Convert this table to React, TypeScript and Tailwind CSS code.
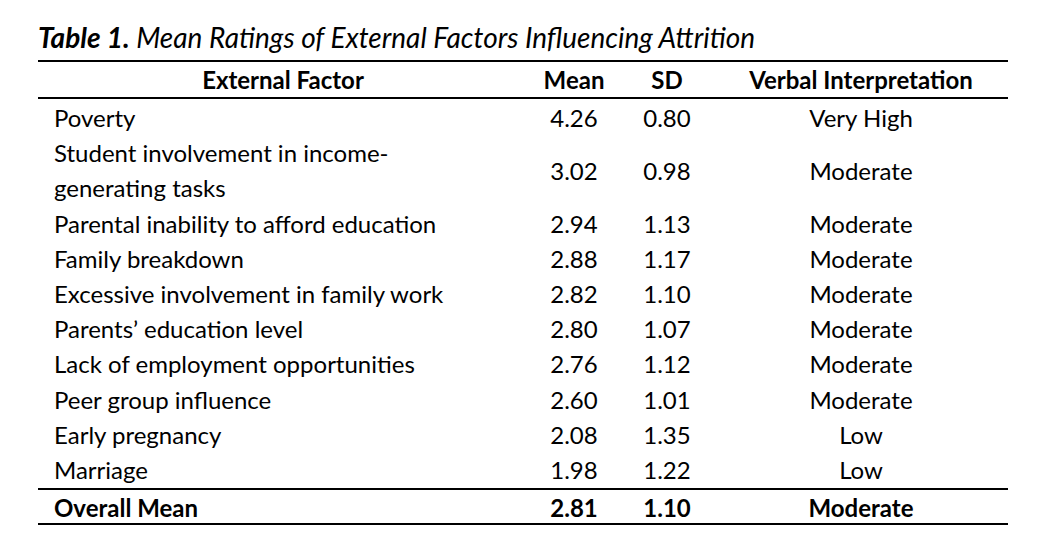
import React from "react";

const rows = [
    { factor: "Poverty", mean: "4.26", sd: "0.80", verbal: "Very High" },
    { factor: "Student involvement in income-\ngenerating tasks", mean: "3.02", sd: "0.98", verbal: "Moderate" },
    { factor: "Parental inability to afford education", mean: "2.94", sd: "1.13", verbal: "Moderate" },
    { factor: "Family breakdown", mean: "2.88", sd: "1.17", verbal: "Moderate" },
    { factor: "Excessive involvement in family work", mean: "2.82", sd: "1.10", verbal: "Moderate" },
    { factor: "Parents\u2019 education level", mean: "2.80", sd: "1.07", verbal: "Moderate" },
    { factor: "Lack of employment opportunities", mean: "2.76", sd: "1.12", verbal: "Moderate" },
    { factor: "Peer group influence", mean: "2.60", sd: "1.01", verbal: "Moderate" },
    { factor: "Early pregnancy", mean: "2.08", sd: "1.35", verbal: "Low" },
    { factor: "Marriage", mean: "1.98", sd: "1.22", verbal: "Low" },
];

const cols = "grid grid-cols-[490px_92px_94px_294px] items-center";

function App() {
    return (
        <div className="w-[1042px] h-[536px] bg-white text-black font-['Lato',sans-serif] pl-[38px] pt-[22px]">
            <h1 className="text-[28px] leading-[30px] italic">
                <span className="font-bold">Table 1.</span> Mean Ratings of External Factors Influencing Attrition
            </h1>
            <div className="w-[970px] mt-[8px] border-t-2 border-b-2 border-black text-[24px]">
                <div className={`${cols} h-[37px] border-b-2 border-black font-bold`}>
                    <div className="text-center">External Factor</div>
                    <div className="text-center">Mean</div>
                    <div className="text-center">SD</div>
                    <div className="text-center">Verbal Interpretation</div>
                </div>
                <div className="py-px">
                    {rows.map((row, index) => (
                        <div key={index} className={`${cols} leading-[35.2px]`}>
                            <div className="pl-4 whitespace-pre-line">{row.factor}</div>
                            <div className="text-center">{row.mean}</div>
                            <div className="text-center">{row.sd}</div>
                            <div className="text-center">{row.verbal}</div>
                        </div>
                    ))}
                </div>
                <div className={`${cols} h-[35px] border-t-2 border-black font-bold`}>
                    <div className="pl-4">Overall Mean</div>
                    <div className="text-center">2.81</div>
                    <div className="text-center">1.10</div>
                    <div className="text-center">Moderate</div>
                </div>
            </div>
        </div>
    );
}

export default App;
